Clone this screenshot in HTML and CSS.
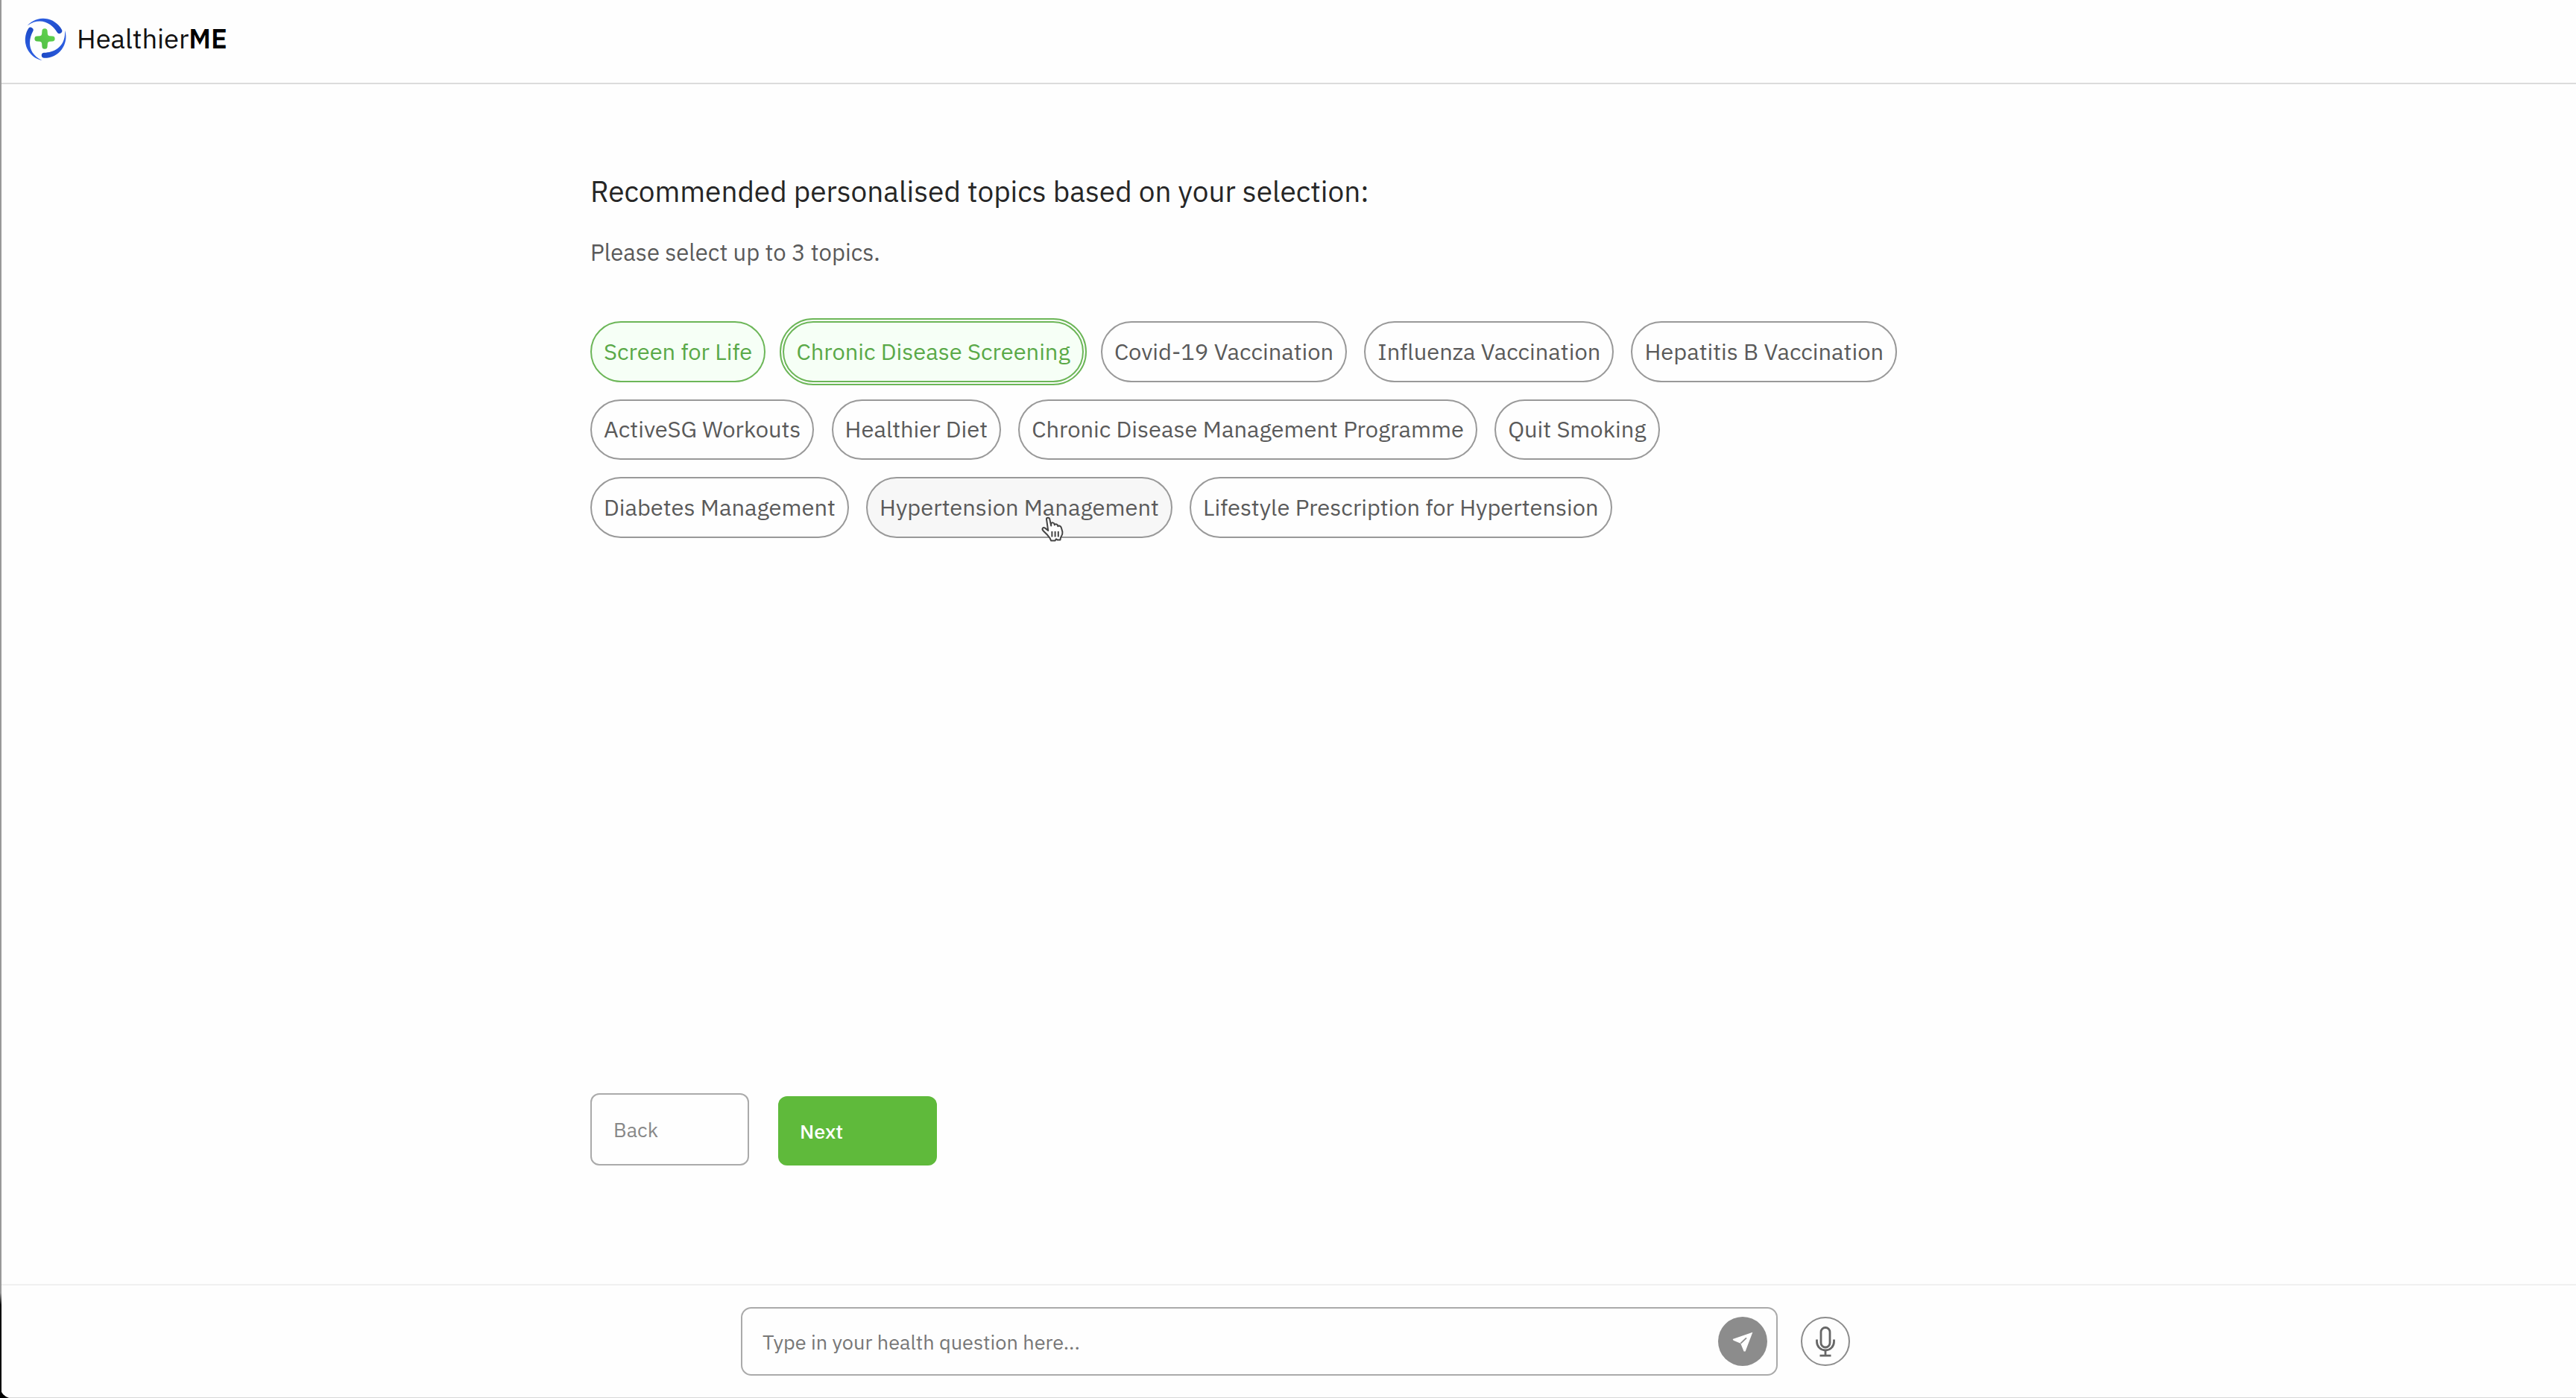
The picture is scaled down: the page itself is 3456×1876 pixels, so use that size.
FILE: index.html
```html
<!DOCTYPE html>
<html lang="en">
<head>
  <meta charset="UTF-8" />
  <title>HealthierME</title>
  <link rel="stylesheet" href="styles.css">
</head>
<body>
  <header class="header">
    <svg class="logo" viewBox="-30 -30 60 60">
      <defs>
        <linearGradient id="blue" x1="0" y1="0" x2="1" y2="1">
          <stop offset="0" stop-color="#2f62e6" />
          <stop offset="1" stop-color="#1c48c4" />
        </linearGradient>
        <linearGradient id="green" x1="0" y1="1" x2="1" y2="0">
          <stop offset="0" stop-color="#4fb944" />
          <stop offset="1" stop-color="#62d84e" />
        </linearGradient>
        <path id="blade" d="M-23.5 -17.5A28.4 28.4 0 0 1 22.7 -12.4A3.4 3.4 0 0 1 16.6 -8.7C10 -19.5 -5 -30.5 -23.5 -17.5Z" />
      </defs>
      <g fill="url(#blue)">
        <use href="#blade" />
        <use href="#blade" transform="rotate(120)" />
        <use href="#blade" transform="rotate(240)" />
      </g>
      <path fill="url(#green)" d="M-3.6 -10.2a3.6 3.6 0 0 1 7.2 0l.3 4q.2 2.3 2.5 2.5l3.8.3a3.4 3.4 0 0 1 0 6.8l-3.8.3q-2.3.2-2.5 2.5l-.3 4a3.6 3.6 0 0 1-7.2 0l-.3-4q-.2-2.3-2.5-2.5l-3.8-.3a3.4 3.4 0 0 1 0-6.8l3.8-.3q2.3-.2 2.5-2.5z" />
    </svg>
    <div class="brand">Healthier<b>ME</b></div>
  </header>

  <main class="content">
    <h1>Recommended personalised topics based on your selection:</h1>
    <p class="hint">Please select up to 3 topics.</p>

    <div class="topics">
      <button class="chip selected">Screen for Life</button>
      <button class="chip selected focused">Chronic Disease Screening</button>
      <button class="chip">Covid-19 Vaccination</button>
      <button class="chip">Influenza Vaccination</button>
      <button class="chip">Hepatitis B Vaccination</button>
      <button class="chip">ActiveSG Workouts</button>
      <button class="chip">Healthier Diet</button>
      <button class="chip">Chronic Disease Management Programme</button>
      <button class="chip">Quit Smoking</button>
      <button class="chip">Diabetes Management</button>
      <button class="chip hovered">Hypertension Management
        <svg class="pointer" viewBox="0 0 32 34">
          <path d="M8 3.5C8 1.2 11.6 1 12.2 3.3L14.2 12.6V9.6C15 7.8 18 8 18.4 10L18.8 11.4C19.8 9.7 22.6 10.2 23 12.2L23.3 13.2C24.4 12 27.2 12.6 27.9 15.2L29.4 20.8C30 24 28.2 26.2 27 28.4L26.4 31.6H22.8L21 30.2L19.4 32.6H14.2L12.6 29.2L9.2 24.8L3.6 19.2C1.2 16.4 3.4 14 6 15.6L10.2 19Z" />
          <path d="M15.4 20V27.4M19.6 20V27.4M23.8 20V27.4" />
        </svg>
      </button>
      <button class="chip">Lifestyle Prescription for Hypertension</button>
    </div>

    <div class="actions">
      <button class="btn back">Back</button>
      <button class="btn next">Next</button>
    </div>
  </main>

  <footer class="footer">
    <div class="question">
      <span>Type in your health question here...</span>
      <svg class="send" viewBox="0 0 66 66">
        <circle cx="33" cy="33" r="33" fill="#8c8c8c" />
        <path d="M46.4 20.8L19.6 30L20.6 31.8L30.2 35.8L34.6 46.6H36.6Z" fill="#fff" />
        <path d="M30.4 35.6L38 28.4" stroke="#8c8c8c" stroke-width="1.8" />
      </svg>
    </div>
    <svg class="mic" viewBox="0 0 66 66">
      <circle cx="33" cy="33" r="32" stroke="#8c8c8c" stroke-width="2" />
      <rect x="27" y="14.5" width="12" height="26.5" rx="6" />
      <path d="M21.5 30.5V33.5A11.5 11.5 0 0 0 44.5 33.5V30.5M33 45V52M25.5 52.2H40.5" />
    </svg>
  </footer>

  <div class="edge"></div>
  <svg class="corner" viewBox="0 0 12 14"><path d="M0 0Q1.5 10 12 14H0Z" /></svg>
</body>
</html>
```
FILE: styles.css
```css
* {
  box-sizing: border-box;
}

body {
  margin: 0;
  height: 1876px;
  position: relative;
  display: flex;
  flex-direction: column;
  overflow: hidden;
  background: #fefefe;
  font-family: "IBM Plex Sans", Roboto, sans-serif;
  color: #5a5a5a;
}

button {
  font-family: inherit;
  margin: 0;
  cursor: pointer;
}

.header {
  height: 113px;
  flex: none;
  display: flex;
  align-items: center;
  gap: 13px;
  padding: 0 0 7px 30px;
  border-bottom: 2px solid #dcdcdc;
}

.logo {
  width: 60px;
  height: 60px;
}

.brand {
  font-size: 36.3px;
  line-height: 48px;
  color: #111;
}

.brand b {
  font-weight: 600;
  color: #000;
}

.content {
  flex: 1;
  display: flex;
  flex-direction: column;
  padding: 120px 0 159px 792px;
}

h1 {
  margin: 0;
  font-size: 38.75px;
  line-height: 48px;
  font-weight: 400;
  color: #262626;
}

.hint {
  margin: 38px 0 72px;
  font-size: 31px;
  line-height: 40px;
}

.topics {
  width: 1770px;
  display: flex;
  flex-wrap: wrap;
  gap: 23px 23.2px;
}

.chip {
  position: relative;
  height: 81.6px;
  padding: 0 16px 2px;
  border: 2px solid #999;
  border-radius: 41px;
  background: #fefefe;
  color: #5a5a5a;
  font-size: 30.9px;
  white-space: nowrap;
}

.selected {
  background: #f6fff6;
  border-color: #6cb658;
  color: #5aa948;
}

.focused {
  outline: 2px solid #6cb658;
  outline-offset: 2px;
}

.hovered {
  background: #f7f7f7;
}

.pointer {
  position: absolute;
  left: 232px;
  top: 51px;
  width: 32px;
  height: 34px;
  fill: #fff;
  stroke: #444;
  stroke-width: 2;
  stroke-linejoin: round;
}

.actions {
  margin-top: auto;
  display: flex;
  align-items: flex-end;
  gap: 39px;
}

.btn {
  width: 213px;
  height: 93px;
  padding: 0 29px;
  border: none;
  border-radius: 12px;
  font-size: 27px;
  text-align: left;
}

.back {
  height: 97px;
  border: 2px solid #aaa;
  background: #fefefe;
  color: #888;
}

.next {
  background: #5fba3b;
  color: #fff;
  font-weight: 500;
}

.footer {
  height: 153px;
  flex: none;
  display: flex;
  align-items: flex-start;
  gap: 31px;
  padding: 29px 0 0 994px;
  border-top: 2px solid #f0f0f0;
  border-bottom: 1px solid #d8d8d8;
}

.question {
  width: 1391px;
  height: 92px;
  display: flex;
  align-items: center;
  justify-content: space-between;
  padding: 0 12px 0 27px;
  border: 2px solid #aaa;
  border-radius: 14px;
  font-size: 27.1px;
  color: #777;
}

.send {
  width: 66px;
  height: 66px;
}

.mic {
  width: 66px;
  height: 66px;
  margin-top: 13px;
  fill: none;
  stroke: #666;
  stroke-width: 2.8;
}

/* window edge on the left side */
.edge {
  position: absolute;
  left: 0;
  top: 0;
  width: 2px;
  height: 100%;
  background: linear-gradient(#999 1735px, #000 1752px);
}

.corner {
  position: absolute;
  left: 0;
  bottom: 0;
  width: 12px;
  height: 14px;
}
```
